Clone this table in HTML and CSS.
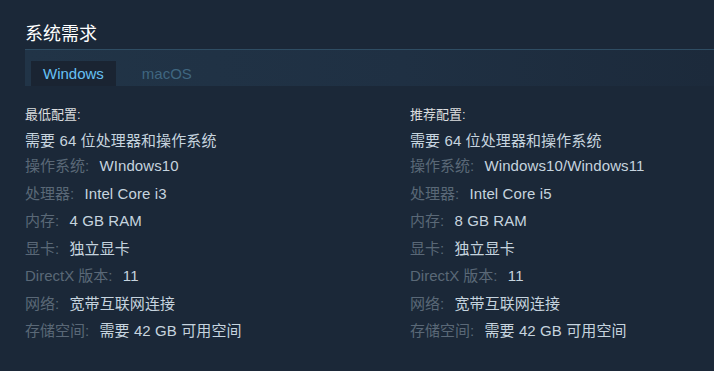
FILE: index.html
```html
<!DOCTYPE html>
<html lang="zh-CN">
<head>
<meta charset="utf-8">
<title>系统需求</title>
<link rel="stylesheet" href="styles.css">
</head>
<body>
<div class="sysreq">
  <h2 class="title">系统需求</h2>
  <div class="tabbar">
    <div class="tab active">Windows</div>
    <div class="tab">macOS</div>
  </div>
  <div class="cols">
    <div class="col">
      <div class="head">最低配置:</div>
      <ul class="list">
        <li class="req">需要 64 位处理器和操作系统</li>
        <li><span class="lbl">操作系统:</span> <span class="val">WIndows10</span></li>
        <li><span class="lbl">处理器:</span> <span class="val">Intel Core i3</span></li>
        <li><span class="lbl">内存:</span> <span class="val">4 GB RAM</span></li>
        <li><span class="lbl">显卡:</span> <span class="val">独立显卡</span></li>
        <li><span class="lbl">DirectX 版本:</span> <span class="val">11</span></li>
        <li><span class="lbl">网络:</span> <span class="val">宽带互联网连接</span></li>
        <li><span class="lbl">存储空间:</span> <span class="val">需要 42 GB 可用空间</span></li>
      </ul>
    </div>
    <div class="col">
      <div class="head">推荐配置:</div>
      <ul class="list">
        <li class="req">需要 64 位处理器和操作系统</li>
        <li><span class="lbl">操作系统:</span> <span class="val">Windows10/Windows11</span></li>
        <li><span class="lbl">处理器:</span> <span class="val">Intel Core i5</span></li>
        <li><span class="lbl">内存:</span> <span class="val">8 GB RAM</span></li>
        <li><span class="lbl">显卡:</span> <span class="val">独立显卡</span></li>
        <li><span class="lbl">DirectX 版本:</span> <span class="val">11</span></li>
        <li><span class="lbl">网络:</span> <span class="val">宽带互联网连接</span></li>
        <li><span class="lbl">存储空间:</span> <span class="val">需要 42 GB 可用空间</span></li>
      </ul>
    </div>
  </div>
</div>
</body>
</html>
```

FILE: styles.css
```css
html, body {
  margin: 0;
  padding: 0;
  background: #1b2838;
}
body {
  font-family: "Liberation Sans", "Noto Sans CJK SC", sans-serif;
  color: #c6d4df;
  width: 714px;
  height: 371px;
  overflow: hidden;
}
.sysreq {
  padding: 22px 0 0 25px;
}
.title {
  margin: 0;
  font-size: 18px;
  font-weight: normal;
  line-height: 24px;
  color: #ffffff;
  height: 27px;
  border-bottom: 1px solid #2f4d63;
}
.tabbar {
  display: flex;
  align-items: flex-end;
  height: 36px;
  padding-left: 6px;
  background: linear-gradient(to right, #213447 0%, #1f3043 55%, #1c2a3b 100%);
}
.tab {
  height: 25px;
  line-height: 25px;
  padding: 0 12px;
  margin-right: 2px;
  font-size: 15px;
  color: #3f6680;
}
.tab.active {
  background: #1a2432;
  color: #67c1f5;
  margin-right: 14px;
}
.cols {
  display: grid;
  grid-template-columns: 385px 1fr;
  padding-top: 21px;
}
.head {
  font-size: 13px;
  line-height: 16px;
  color: #dcdedf;
  margin-bottom: 8px;
}
.list {
  list-style: none;
  margin: 0;
  padding: 0;
}
.list li {
  font-size: 15px;
  line-height: 20px;
  margin-bottom: 7.5px;
  white-space: nowrap;
  letter-spacing: 0.1px;
}
.list li.req {
  color: #c6d4df;
  margin-bottom: 5px;
}
.lbl {
  color: #5a6877;
  margin-right: 6px;
  letter-spacing: 0;
}
.val {
  color: #c6d4df;
}
```
